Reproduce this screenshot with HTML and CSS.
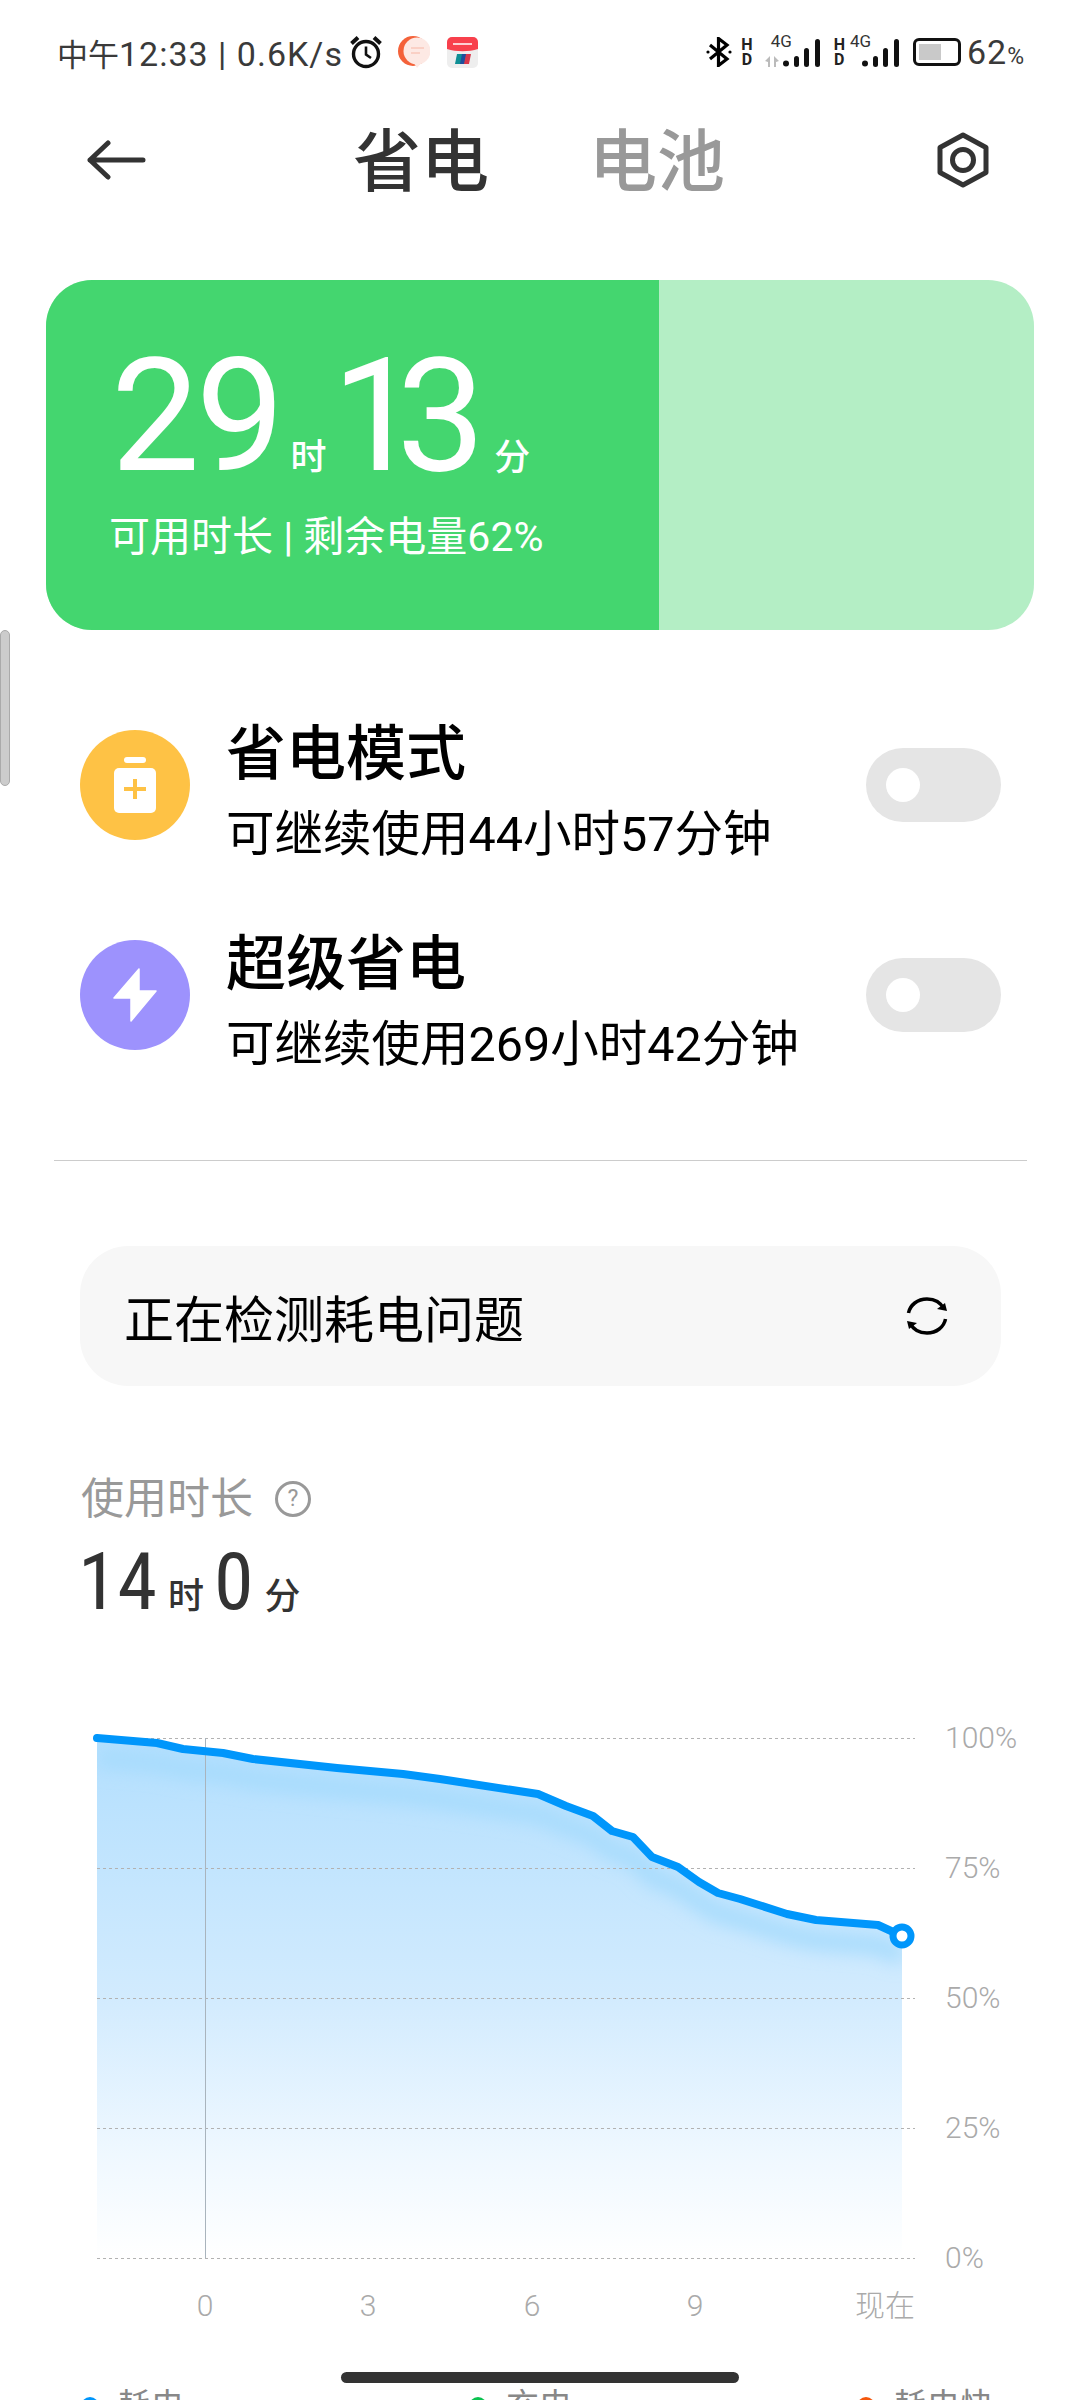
FILE: index.html
```html
<!DOCTYPE html>
<html lang="zh-CN">
<head>
    <meta charset="UTF-8">
    <meta name="viewport" content="width=device-width, initial-scale=1.0">
    <title>省电</title>
    <link rel="stylesheet" href="styles.css">
</head>
<body>
    <div class="scroll-thumb"></div>

    <div class="status-bar">
        <div class="status-left">
            <span class="status-text"><span class="cjk">中午</span>12:33 | 0.6K/s</span>
            <svg class="ic-alarm" width="34" height="34" viewBox="0 0 34 34" fill="none" stroke="#111">
                <circle cx="17" cy="19" r="12.5" stroke-width="3.4"/>
                <path d="M17 11.5V19.5L22 23" stroke-width="2.6"/>
                <path d="M2.5 8.5L9 2.5M31.5 8.5L25 2.5" stroke-width="4"/>
            </svg>
            <svg class="ic-chat" width="32" height="32" viewBox="0 0 32 32">
                <circle cx="15" cy="15" r="15" fill="#f4623a"/>
                <circle cx="19" cy="15" r="13.5" fill="#fde9e4"/>
                <path d="M16 27L19 32L24 26Z" fill="#fde9e4"/>
                <path d="M13 12H26M13 17H22" stroke="#f9c8bb" stroke-width="1.6"/>
            </svg>
            <svg class="ic-card" width="31" height="31" viewBox="0 0 31 31">
                <rect width="31" height="31" rx="5" fill="#eee"/>
                <path d="M0 12V5a5 5 0 0 1 5-5H26a5 5 0 0 1 5 5V12C22 15 9 15 0 12Z" fill="#f8404c"/>
                <path d="M6 7H25" stroke="#fff" stroke-width="1.5"/>
                <path d="M10 17H16L14 27H8Z" fill="#0f8f95"/>
                <path d="M15 17H20L18 27H13Z" fill="#1d4f9c"/>
                <path d="M19 17H24L22 27H17Z" fill="#d8374a"/>
            </svg>
        </div>
        <div class="status-right">
            <svg class="ic-bt" width="26" height="30" viewBox="0 0 26 30" fill="none" stroke="#000" stroke-width="3.2">
                <path d="M4 8L21 22L12.5 28.5V1.5L21 8L4 22"/>
                <circle cx="2" cy="15" r="1.6" fill="#000" stroke="none"/>
                <circle cx="24" cy="15" r="1.6" fill="#000" stroke="none"/>
            </svg>
            <span class="hd hd-first">H<br>D</span>
            <span class="net net-first">
                <span class="net-label">4G</span>
                <svg class="arrows" width="16" height="12" viewBox="0 0 16 12" fill="#bbb">
                    <path d="M1 6L6 1V12H4V7ZM15 6L10 1V12H12V7Z"/>
                </svg>
                <svg class="bars" width="37" height="28" viewBox="0 0 37 28" fill="#111">
                    <circle cx="3" cy="24.5" r="3"/>
                    <rect x="11" y="17" width="5" height="11" rx="2.5"/>
                    <rect x="21" y="9" width="5" height="19" rx="2.5"/>
                    <rect x="32" y="0" width="5" height="28" rx="2.5"/>
                </svg>
            </span>
            <span class="hd">H<br>D</span>
            <span class="net net-second">
                <span class="net-label">4G</span>
                <svg class="bars" width="37" height="28" viewBox="0 0 37 28" fill="#111">
                    <circle cx="3" cy="24.5" r="3"/>
                    <rect x="11" y="17" width="5" height="11" rx="2.5"/>
                    <rect x="21" y="9" width="5" height="19" rx="2.5"/>
                    <rect x="32" y="0" width="5" height="28" rx="2.5"/>
                </svg>
            </span>
            <span class="battery"><span class="battery-level" style="width:62%"></span></span>
            <span class="status-text batt-num">62<small>%</small></span>
        </div>
    </div>

    <div class="top-nav">
        <svg class="back" width="60" height="40" viewBox="0 0 60 40" fill="none" stroke="#333" stroke-width="5" stroke-linecap="round" stroke-linejoin="round">
            <path d="M3 20H56M21 3L3 20L21 37"/>
        </svg>
        <div class="tabs">
            <span class="tab tab-on">省电</span>
            <span class="tab">电池</span>
        </div>
        <svg class="gear" width="52" height="56" viewBox="0 0 52 56" fill="none" stroke="#333" stroke-width="5" stroke-linejoin="round">
            <path d="M26 3L49 15.500V40.500L26 53L3 40.500V15.500Z"/>
            <circle cx="26" cy="28" r="10.500"/>
        </svg>
    </div>

    <div class="time-card">
        <div class="card-fill" style="width:62%">
            <div class="big-time">
                <span class="big-num snug">29</span><span class="big-unit">时</span>
                <span class="big-num tight">13</span><span class="big-unit after-tight">分</span>
            </div>
            <div class="card-sub">可用时长 | 剩余电量62%</div>
        </div>
    </div>

    <div class="mode-list">
        <div class="mode-row">
            <span class="mode-icon yellow">
                <svg width="44" height="56" viewBox="0 0 44 56">
                    <rect x="11" y="0" width="22" height="6" rx="3" fill="#fff"/>
                    <rect x="1" y="11" width="42" height="45" rx="5" fill="#fff"/>
                    <path d="M22 22V42M11 32H33" stroke="#fec245" stroke-width="4"/>
                </svg>
            </span>
            <div class="mode-text">
                <div class="mode-title">省电模式</div>
                <div class="mode-sub">可继续使用44小时57分钟</div>
            </div>
            <span class="toggle"><span class="knob"></span></span>
        </div>
        <div class="mode-row">
            <span class="mode-icon purple">
                <svg width="44" height="54" viewBox="0 0 44 54">
                    <path d="M26 1L1 30H18V53L43 23H26Z" fill="#fff" stroke="#fff" stroke-width="1.500" stroke-linejoin="round"/>
                </svg>
            </span>
            <div class="mode-text">
                <div class="mode-title">超级省电</div>
                <div class="mode-sub">可继续使用269小时42分钟</div>
            </div>
            <span class="toggle"><span class="knob"></span></span>
        </div>
    </div>

    <div class="divider"></div>

    <div class="check-panel">
        <span>正在检测耗电问题</span>
        <svg width="42" height="38" viewBox="0 0 42 38" fill="none" stroke="#000" stroke-width="3.500">
            <path d="M2.500 16C4 8 11.500 2 21 2C29 2 35 6 38 12"/>
            <path d="M39.500 22C38 30 30.500 36 21 36C13 36 7 32 4 26"/>
            <path d="M41 14L31 12L39 6Z" fill="#000" stroke="none"/>
            <path d="M1 24L11 26L3 32Z" fill="#000" stroke="none"/>
        </svg>
    </div>

    <div class="usage">
        <div class="usage-label">
            <span>使用时长</span>
            <span class="help">?</span>
        </div>
        <div class="usage-time">
            <span class="usage-num">14</span><span class="usage-unit">时</span>
            <span class="usage-num">0</span><span class="usage-unit">分</span>
        </div>
    </div>

    <svg class="chart" width="1080" height="620" viewBox="0 1720 1080 620">
        <defs>
            <linearGradient id="areaFill" x1="0" y1="1738" x2="0" y2="2258" gradientUnits="userSpaceOnUse">
                <stop offset="0" stop-color="#b3dffe"/>
                <stop offset="0.5" stop-color="#d2ebfe"/>
                <stop offset="0.8" stop-color="#eff8ff"/>
                <stop offset="1" stop-color="#fff"/>
            </linearGradient>
            <clipPath id="areaClip">
                <path d="M97 1738L157 1743L183 1749L223 1753L253 1759L337 1768L403 1774L440 1779L538 1794L566 1806L593 1816L612 1831L633 1837L652 1857L678 1867L699 1882L718 1893L740 1899L787 1914L816 1920L878 1925L902 1936V2258H97Z"/>
            </clipPath>
            <filter id="soft" x="-5%" y="-30%" width="110%" height="160%">
                <feGaussianBlur stdDeviation="9"/>
            </filter>
        </defs>

        <path d="M97 1738L157 1743L183 1749L223 1753L253 1759L337 1768L403 1774L440 1779L538 1794L566 1806L593 1816L612 1831L633 1837L652 1857L678 1867L699 1882L718 1893L740 1899L787 1914L816 1920L878 1925L902 1936V2258H97Z" fill="url(#areaFill)"/>
        <g clip-path="url(#areaClip)">
            <path d="M97 1758L157 1763L183 1769L223 1773L253 1779L337 1788L403 1794L440 1799L538 1814L566 1826L593 1836L612 1851L633 1857L652 1877L678 1887L699 1902L718 1913L740 1919L787 1934L816 1940L878 1945L902 1956" fill="none" stroke="#a6dbfd" stroke-width="18" filter="url(#soft)"/>
        </g>

        <g stroke="#b2b2b2" stroke-width="1" stroke-dasharray="3 3">
            <path d="M97 1738.500H915"/>
            <path d="M97 1868.500H915"/>
            <path d="M97 1998.500H915"/>
            <path d="M97 2128.500H915"/>
            <path d="M97 2258.500H915"/>
        </g>
        <path d="M205.500 1738V2258" stroke="#a9b4bd" stroke-width="1"/>

        <path d="M97 1738L157 1743L183 1749L223 1753L253 1759L337 1768L403 1774L440 1779L538 1794L566 1806L593 1816L612 1831L633 1837L652 1857L678 1867L699 1882L718 1893L740 1899L787 1914L816 1920L878 1925L902 1936" fill="none" stroke="#0096fb" stroke-width="8" stroke-linecap="round" stroke-linejoin="round"/>
        <circle cx="902" cy="1936" r="9" fill="#fff" stroke="#0096fb" stroke-width="7"/>

        <g class="axis-text">
            <text x="945" y="1748">100%</text>
            <text x="945" y="1878">75%</text>
            <text x="945" y="2008">50%</text>
            <text x="945" y="2138">25%</text>
            <text x="945" y="2268">0%</text>
        </g>
        <g class="axis-text mid">
            <text x="205" y="2316">0</text>
            <text x="368" y="2316">3</text>
            <text x="532" y="2316">6</text>
            <text x="695" y="2316">9</text>
            <text x="885" y="2316">现在</text>
        </g>
    </svg>

    <div class="legend">
        <span class="legend-item"><i class="dot blue"></i>耗电</span>
        <span class="legend-item"><i class="dot green"></i>充电</span>
        <span class="legend-item"><i class="dot orange"></i>耗电快</span>
    </div>

    <div class="home-bar"></div>
</body>
</html>
```

FILE: styles.css
```css
* {
    box-sizing: border-box;
}
html, body {
    margin: 0;
    padding: 0;
}
body {
    position: relative;
    width: 1080px;
    height: 2400px;
    overflow: hidden;
    background: #fff;
    color: #000;
    font-family: Roboto, "Noto Sans CJK SC", sans-serif;
}
.scroll-thumb {
    position: absolute;
    left: 0;
    top: 630px;
    width: 10px;
    height: 156px;
    background: #ccc;
    border: 1px solid #aaa;
    border-radius: 5px;
}

/* status bar */
.status-bar {
    height: 104px;
    padding: 0 55px 0 57px;
    display: flex;
    justify-content: space-between;
    align-items: center;
}
.status-left, .status-right {
    display: flex;
    align-items: center;
}
.status-text {
    font-size: 34px;
    letter-spacing: 1px;
    color: #3a3a3a;
    white-space: nowrap;
}
.status-text .cjk {
    font-size: 31px;
    letter-spacing: 0;
}
.ic-alarm {
    margin-left: 6px;
}
.ic-chat {
    margin-left: 15px;
}
.ic-card {
    margin-left: 17px;
}
.hd {
    margin-left: 11px;
    font-size: 16px;
    line-height: 15px;
    font-weight: 700;
    color: #222;
    text-align: center;
}
.hd-first {
    margin-left: 9px;
}
.net {
    position: relative;
    display: block;
    height: 30px;
}
.net-first {
    width: 56px;
    margin: 0 3px 0 11px;
}
.net-second {
    width: 49px;
    margin-left: 5px;
}
.net-label {
    position: absolute;
    top: -4px;
    font-size: 17px;
    line-height: 17px;
    color: #333;
}
.net-first .net-label {
    left: 7px;
}
.net-second .net-label {
    left: 0;
}
.arrows {
    position: absolute;
    left: 0;
    bottom: 0;
}
.bars {
    position: absolute;
    right: 0;
    bottom: 0;
}
.battery {
    display: block;
    width: 48px;
    height: 28px;
    margin-left: 14px;
    padding: 3px;
    border: 3px solid #111;
    border-radius: 6px;
}
.battery-level {
    display: block;
    height: 100%;
    background: #c9c9c9;
}
.batt-num {
    margin-left: 6px;
}
.batt-num small {
    font-size: 23px;
}

/* header */
.top-nav {
    height: 112px;
    padding: 0 91px 0 87px;
    display: grid;
    grid-template-columns: 1fr auto 1fr;
    align-items: center;
}
.gear {
    justify-self: end;
}
.tabs {
    display: flex;
    gap: 100px;
    padding: 6px 0 0 2px;
}
.tab {
    font-size: 68px;
    font-weight: 500;
    line-height: 80px;
    color: #999;
}
.tab-on {
    color: #333;
}

/* big card */
.time-card {
    height: 350px;
    margin: 64px 46px 0;
    background: #b4eec5;
    border-radius: 46px;
    overflow: hidden;
}
.card-fill {
    height: 100%;
    padding: 72px 0 0 65px;
    background: #44d66f;
    color: #fff;
}
.big-time {
    display: flex;
    align-items: baseline;
    height: 128px;
    white-space: nowrap;
}
.big-num {
    font-size: 158px;
    font-weight: 400;
    line-height: 128px;
    font-stretch: 92%;
}
.big-num.snug {
    letter-spacing: -4px;
}
.big-num.tight {
    margin-left: -3px;
    letter-spacing: -24px;
}
.big-unit {
    margin: 0 8px 0 10px;
    font-size: 36px;
    font-weight: 500;
}
.big-unit.after-tight {
    margin-left: 33px;
}
.card-sub {
    margin: 32px 0 0 -2px;
    font-size: 41px;
    line-height: 50px;
}

/* mode rows */
.mode-list {
    margin-top: 77px;
    padding: 0 79px 0 80px;
    display: flex;
    flex-direction: column;
    gap: 54px;
}
.mode-row {
    display: flex;
    align-items: center;
    height: 156px;
}
.mode-icon {
    width: 110px;
    height: 110px;
    border-radius: 50%;
    display: flex;
    align-items: center;
    justify-content: center;
}
.mode-icon.yellow {
    background: #fec245;
}
.mode-icon.purple {
    background: #9d92fd;
}
.mode-text {
    flex: 1;
    margin-left: 36px;
    padding-top: 18px;
}
.mode-title {
    font-size: 60px;
    font-weight: 500;
    line-height: 78px;
}
.mode-sub {
    margin-top: 3px;
    font-size: 48.5px;
    line-height: 76px;
}
.toggle {
    width: 135px;
    height: 74px;
    padding: 20px;
    border-radius: 37px;
    background: #e5e5e5;
}
.knob {
    display: block;
    width: 34px;
    height: 34px;
    border-radius: 50%;
    background: #fff;
}

.divider {
    height: 1px;
    margin: 87px 53px 0 54px;
    background: #ccc;
}

/* checking panel */
.check-panel {
    height: 140px;
    margin: 85px 79px 0 80px;
    padding: 0 53px 0 44px;
    display: flex;
    justify-content: space-between;
    align-items: center;
    background: #f7f7f7;
    border-radius: 48px;
    font-size: 50px;
}

/* usage */
.usage {
    margin-top: 84px;
    padding-left: 78px;
}
.usage-label {
    display: flex;
    align-items: center;
    padding-left: 3px;
    font-size: 43px;
    line-height: 58px;
    color: #999;
}
.help {
    width: 36px;
    height: 36px;
    margin-left: 22px;
    border: 3px solid #999;
    border-radius: 50%;
    font-size: 23px;
    line-height: 30px;
    text-align: center;
}
.usage-time {
    display: flex;
    align-items: baseline;
    margin-top: 12px;
    color: #333;
}
.usage-num {
    font-size: 80px;
    line-height: 84px;
    font-stretch: 85%;
}
.usage-unit {
    margin: 0 10px 0 11px;
    font-size: 36px;
    font-weight: 500;
}

/* chart */
.chart {
    display: block;
    margin-top: 96px;
}
.axis-text {
    font-size: 30px;
    font-weight: 300;
    fill: #aaa;
}
.axis-text.mid {
    text-anchor: middle;
}

/* legend, mostly under the fold */
.legend {
    display: flex;
    margin-top: 44px;
    padding-left: 81px;
    font-size: 33px;
    line-height: 44px;
    color: #888;
}
.legend-item {
    flex: none;
    display: flex;
    align-items: center;
    width: 388px;
}
.legend-item:last-child {
    width: auto;
}
.dot {
    width: 18px;
    height: 18px;
    margin-right: 19px;
    border-radius: 50%;
}
.dot.blue {
    background: #0096fb;
}
.dot.green {
    background: #0ac24f;
}
.dot.orange {
    background: #f4570c;
}

.home-bar {
    position: absolute;
    left: 341px;
    top: 2372px;
    width: 398px;
    height: 11px;
    border-radius: 6px;
    background: #333;
}
```
